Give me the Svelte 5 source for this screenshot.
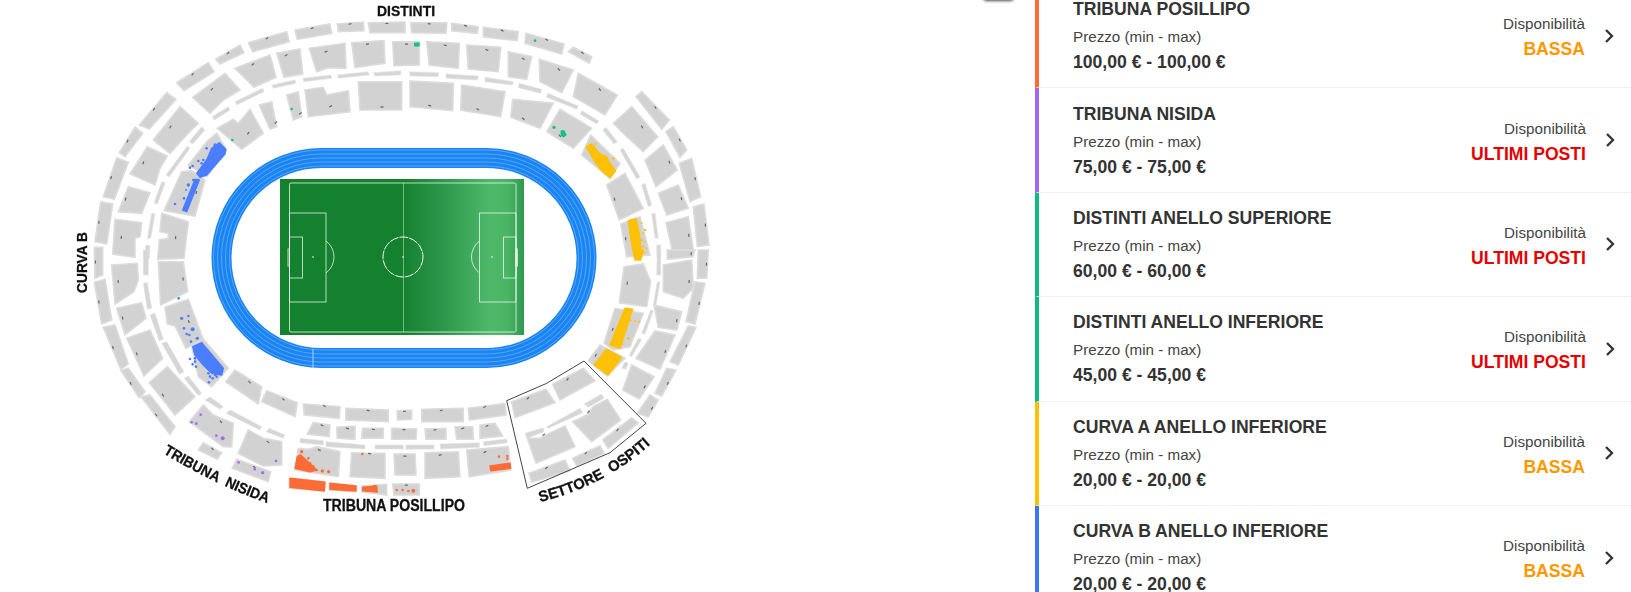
<script>
  const O = { a: [60, 0], b: [380, 0], c: [60, 250], d: [380, 250] };
  const conv = (z, arr) => arr.map((v, i) => +(O[z][i % 2] + v / 3).toFixed(1));
  const big = {
    a: [[705,90,810,72,815,100,712,118],[832,72,910,66,912,92,835,95],[925,68,1035,66,1035,98,930,98],[565,128,680,95,688,125,578,155],[467,178,540,135,552,158,480,192],[350,248,445,188,462,215,372,272],[238,375,320,278,348,298,268,387],[178,458,225,382,248,400,195,470],[130,590,170,473,205,487,163,598],[105,725,122,605,158,612,140,732],[650,160,720,147,728,222,672,232],[748,145,855,130,858,205,805,203,770,215],[875,128,972,122,975,190,885,203],[525,205,630,165,648,232,582,262],[398,292,495,220,540,270,490,300,450,340],[280,420,360,320,415,370,385,400,330,460],[210,522,262,440,322,468,300,505,285,555],[175,635,205,560,270,578,245,640],[165,658,245,668,240,710,225,715,225,772,158,762]],
    b: [[92,68,200,68,198,100,95,98],[215,70,295,80,292,100,215,92],[310,82,415,95,412,122,310,110],[438,100,552,132,545,162,435,130],[565,155,580,142,635,170,628,190],[38,125,118,125,118,195,42,197],[140,125,238,130,235,205,148,195],[260,135,362,142,355,215,265,207],[385,155,455,170,440,238,385,230],[478,178,580,210,545,278,480,245],[595,220,712,285,675,345,580,290],[768,290,785,275,868,360,845,388],[858,395,880,380,920,450,900,472],[898,490,935,475,962,590,930,605],[940,620,972,612,987,735,952,740],[700,370,755,320,833,410,790,455,740,410],[795,480,850,435,892,510,828,560],[835,580,895,555,925,625,860,645],[858,668,925,650,940,750,880,765]],
    c: [[103,-8,128,-8,128,75,105,85],[103,97,135,88,155,210,125,222],[130,232,165,225,205,342,182,358],[183,362,205,355,255,425,238,443],[243,440,270,435,345,530,330,553],[155,45,232,40,235,90,222,125,165,162],[170,175,245,158,258,205,195,255],[200,265,270,240,308,325,252,378],[268,398,322,350,405,440,345,495]],
    d: [[955,0,985,0,980,85,952,85],[945,95,975,100,945,222,918,215],[925,228,948,232,895,345,870,335],[860,355,888,360,845,438,825,430],[772,490,810,435,835,450,805,500],[850,45,935,30,940,115,910,145,850,125],[822,165,905,185,890,240,835,232],[768,325,825,243,885,255,840,358],[728,420,755,345,822,380,778,447],[862,0,945,0,938,20,862,28]],
  };
  const inner = {
    a: [[735,270,790,262,800,285,865,272,870,335,745,350],[680,285,715,275,725,350,700,360],[598,315,635,305,650,380,630,388],[472,385,520,358,535,370,570,328,610,400,545,448],[895,245,1025,245,1025,330,900,330],[440,425,470,400,500,450,440,530,385,495],[365,515,395,512,435,540,405,648,312,632],[305,640,385,665,372,775,293,778,298,720,325,715,325,700,300,695]],
    b: [[90,243,220,250,218,332,90,320],[245,255,375,275,362,350,242,330],[398,298,520,310,480,385,392,352],[540,328,635,385,580,445,500,395],[632,405,720,490,690,535,605,465],[680,555,735,520,790,625,718,660],[722,672,780,650,810,765,740,770]],
    c: [[295,35,370,35,383,125,302,165],[315,172,385,148,430,268,378,295,345,228,322,222],[395,290,428,265,505,355,455,410,415,380],[497,395,525,360,605,410,595,462],[605,455,620,422,712,458,705,500],[730,462,840,470,838,505,733,495],[858,475,985,480,985,515,857,510],[742,552,760,518,810,525,808,560],[830,532,885,528,885,568,832,565],[908,535,970,535,970,565,905,565],[715,595,745,598,770,590,840,605,835,680,705,660],[875,608,925,610,975,610,975,685,870,680],[688,685,795,695,792,722,688,715],[808,700,890,708,888,725,808,720],[905,708,980,703,980,735,905,725],[388,515,430,465,460,495,520,520,515,590,490,590],[415,600,430,578,485,608,472,628],[535,610,565,540,610,565,665,575,665,645,610,648],[517,655,530,628,632,665,625,695]],
    d: [[52,482,95,480,95,508,52,510],[125,478,250,475,250,515,125,515],[265,475,375,460,378,495,268,510],[35,535,110,537,108,568,35,568],[135,537,198,535,198,568,138,568],[225,530,278,530,280,568,230,568],[300,525,345,520,368,558,300,565],[42,612,105,612,108,675,45,675],[135,608,235,605,240,680,135,685],[260,600,385,590,392,660,268,680],[38,702,118,702,118,735,42,735],[395,455,498,418,525,458,405,503],[518,403,610,355,645,392,540,450],[578,515,620,495,640,470,682,448,722,510,635,575],[442,565,480,565,508,550,555,528,585,590,468,640],[668,570,755,503,775,518,685,595],[578,625,660,587,672,610,590,648],[447,670,555,630,570,662,455,697],[732,50,790,42,812,95,800,170,718,158],[672,280,705,175,790,190,750,290,700,300],[625,332,660,285,735,325,680,378]],
  };
  const strips = {
    a: [[635,255,705,240,708,250,640,265],[728,235,812,225,815,235,732,245],[832,225,925,215,928,225,835,235],[940,218,1022,212,1022,225,945,228],[525,305,608,265,612,275,530,315],[457,350,505,320,510,330,463,360],[388,425,425,380,435,390,398,432],[318,525,382,438,390,445,328,530],[282,610,305,545,316,548,292,612],[262,715,275,640,285,642,272,715],[252,775,258,735,270,737,268,775]],
    b: [[88,215,175,218,175,230,90,228],[198,222,295,228,292,240,198,235],[315,232,400,245,398,255,315,245],[418,250,485,268,482,280,415,263],[503,280,595,318,590,328,500,292],[607,332,657,363,650,372,600,342],[668,390,678,382,712,425,702,432],[720,450,730,445,780,530,770,538],[785,555,795,550,815,615,805,620],[815,640,825,640,835,715,825,715],[830,735,842,735,842,770,830,770]],
    c: [[250,0,265,0,265,75,250,75],[250,100,262,97,275,175,262,178],[270,195,285,190,310,268,298,272],[305,280,320,275,372,365,358,372],[373,385,385,378,425,430,415,437],[435,450,450,440,490,470,480,478],[498,490,510,480,605,530,600,540],[618,545,628,535,675,555,670,565],[720,565,790,572,790,585,720,578],[798,575,915,585,915,597,798,590],[945,585,1030,585,1030,597,945,597]],
    d: [[78,585,162,585,162,597,78,598],[180,582,298,578,298,592,182,597],[310,575,380,567,382,578,312,587],[612,462,665,432,672,445,625,472],[500,530,600,475,608,488,505,535],[435,550,490,533,492,545,440,565],[832,0,842,0,842,75,830,75],[820,165,832,95,840,97,828,165],[785,250,812,180,820,182,795,252],[748,315,775,265,785,268,755,320],[725,355,735,335,745,340,738,358]],
  };
  const flat = (g) => Object.keys(g).flatMap((z) => g[z].map((p) => conv(z, p)));
  const pts = (p) => p.join(' ');
  const CX = 403, CY = 258;
  const mark = (p, out) => {
    let x = 0, y = 0;
    for (let i = 0; i < p.length; i += 2) { x += p[i]; y += p[i + 1]; }
    x /= p.length / 2; y /= p.length / 2;
    const dx = x - CX, dy = y - CY, d = Math.hypot(dx, dy);
    let r = 0;
    for (let i = 0; i < p.length; i += 2) r += Math.abs((p[i] - x) * dx + (p[i + 1] - y) * dy) / d;
    r /= p.length / 2;
    const s = (out ? 0.8 : -0.8) * r;
    return { x: +(x + (dx / d) * s).toFixed(1), y: +(y + (dy / d) * s).toFixed(1), a: +((Math.atan2(dy, dx) * 180) / Math.PI + 90).toFixed(0) };
  };
  const bigP = flat(big), innerP = flat(inner), stripP = flat(strips);
  const marks = [...bigP.map((p) => mark(p, true)), ...innerP.map((p) => mark(p, false))];

  const seats = [
    { c: '#4a7dff', z: 'a', polys: [[410,520,440,480,455,445,478,428,497,448,495,462,440,525,420,532],[405,538,418,540,380,635,368,630]], dots: [[440,445,3],[465,435,4],[415,483,3],[398,498,3],[390,503,3],[425,490,3],[430,480,3],[345,612,3],[372,595,3],[400,540,3],[385,555,4],[378,570,2]] },
    { c: '#4a7dff', z: 'c', polys: [[398,290,425,278,490,355,485,375,455,370,430,345,405,315]], dots: [[356,145,3],[365,205,4],[385,198,3],[372,235,3],[398,238,5],[380,252,3],[388,255,3],[393,275,3],[412,265,4],[390,327,3],[405,325,3],[405,335,3],[398,343,3],[408,350,3],[445,370,3],[465,375,3],[450,380,3],[458,385,3],[470,380,3],[447,397,3]] },
    { c: '#10c47c', z: 'a', polys: [], dots: [[517,420,3],[695,327,3]] },
    { c: '#10c47c', z: 'b', polys: [[104,130,117,130,117,137,104,137],[544,393,552,393,558,405,550,410,544,404]], dots: [[465,122,3],[522,382,4]] },
    { c: '#ffc107', z: 'b', polys: [[618,440,635,432,660,462,680,470,690,490,707,512,690,533,665,512,648,490],[745,662,768,655,778,700,785,770,762,770,752,715]], dots: [[645,432,2],[700,475,3],[785,670,2],[795,690,3],[790,700,2],[785,720,3],[795,725,2],[790,740,2],[800,745,2]] },
    { c: '#ffc107', z: 'd', polys: [[760,0,790,0,782,30,765,30],[735,175,758,178,720,295,690,285],[680,297,725,322,685,375,642,345]], dots: [[793,8,2],[752,210,2],[765,213,2],[778,215,2],[745,265,3],[728,282,2]] },
    { c: '#ff6b35', z: 'c', polys: [[705,655,712,620,722,615,760,650,770,660,750,665],[690,685,795,697,793,723,690,712],[810,700,888,708,888,723,810,718],[908,712,950,708,952,726,908,722]], dots: [[725,605,4],[745,625,3],[750,640,3],[760,650,3],[770,660,3],[787,663,4],[806,665,4],[907,612,3]] },
    { c: '#ff6b35', z: 'd', polys: [[330,648,390,640,392,655,332,662]], dots: [[357,620,3],[382,618,3],[382,626,3],[50,720,3],[68,720,3],[85,723,3],[100,722,5]] },
    { c: '#a868f5', z: 'c', polys: [], dots: [[422,494,3],[395,517,3],[409,521,3],[469,557,3],[488,565,5],[536,637,3],[584,658,3],[608,668,4],[648,633,3]] },
  ];
  const laps = [0, 4, 8, 12, 16];
  const rows = [
    { t: 'TRIBUNA POSILLIPO', p: '100,00 € - 100,00 €', s: 'BASSA', c: 'orange' },
    { t: 'TRIBUNA NISIDA', p: '75,00 € - 75,00 €', s: 'ULTIMI POSTI', c: 'purple' },
    { t: 'DISTINTI ANELLO SUPERIORE', p: '60,00 € - 60,00 €', s: 'ULTIMI POSTI', c: 'green' },
    { t: 'DISTINTI ANELLO INFERIORE', p: '45,00 € - 45,00 €', s: 'ULTIMI POSTI', c: 'green' },
    { t: 'CURVA A ANELLO INFERIORE', p: '20,00 € - 20,00 €', s: 'BASSA', c: 'yellow' },
    { t: 'CURVA B ANELLO INFERIORE', p: '20,00 € - 20,00 €', s: 'BASSA', c: 'blue' },
  ];
</script>

<div class="page">
  <svg class="map" width="720" height="592" viewBox="0 0 720 592">
    <defs>
      <linearGradient id="grass" x1="0" x2="1" y1="0" y2="0">
        <stop offset="0" stop-color="#14812f" />
        <stop offset="0.5" stop-color="#14812f" />
        <stop offset="0.66" stop-color="#2b9549" />
        <stop offset="0.8" stop-color="#44ae60" />
        <stop offset="0.86" stop-color="#4cb868" />
        <stop offset="0.93" stop-color="#4ab565" />
        <stop offset="1" stop-color="#2f9a4f" />
      </linearGradient>
      <path id="lbl-nisida" d="M163,453 Q217,486 270,504" />
      <path id="lbl-ospiti" d="M540,502 Q605,486 652,443" />
    </defs>

    {#each stripP as p}<polygon class="strip" points={pts(p)} />{/each}
    {#each bigP as p}<polygon class="sec" points={pts(p)} />{/each}
    {#each innerP as p}<polygon class="sec" points={pts(p)} />{/each}
    {#each marks as m}<rect class="tick" x={m.x - 1.5} y={m.y - 0.6} width="3" height="1.2" transform="rotate({m.a} {m.x} {m.y})" />{/each}

    {#each seats as g}
      {#each g.polys as p}<polygon class="blob" fill={g.c} stroke={g.c} points={pts(conv(g.z, p))} />{/each}
      {#each g.dots as d}<circle fill={g.c} cx={O[g.z][0] + d[0] / 3} cy={O[g.z][1] + d[1] / 3} r={d[2] / 3 + 0.3} />{/each}
    {/each}

    <polygon class="guest" points={pts(conv('d', [380,452,500,400,612,333,798,520,690,608,442,715]))} />

    <rect class="track" x="221.5" y="158" width="365" height="200" rx="100" ry="100" />
    {#each laps as l}
      <rect class="lap" x={213.5 + l} y={150 + l} width={381 - 2 * l} height={216 - 2 * l} rx={108 - l} ry={108 - l} />
    {/each}
    <line class="lapline" x1="313" y1="349" x2="313" y2="368" />

    <rect x="280" y="179" width="244" height="156" fill="url(#grass)" />
    <g class="lines">
      <rect x="289.5" y="183" width="226.5" height="149" rx="1.5" />
      <line class="half" x1="403.5" y1="183" x2="403.5" y2="332" />
      <circle class="dash" cx="403" cy="257" r="20" />
      <rect x="289.5" y="213" width="36.5" height="89" />
      <rect x="289.5" y="237" width="13" height="41" />
      <rect x="479.5" y="213" width="36.5" height="89" />
      <rect x="503.5" y="237" width="12.5" height="41" />
      <rect x="288" y="249" width="1.5" height="17" />
      <rect x="516" y="249" width="1.5" height="17" />
      <path d="M326,241 A20,20 0 0 1 326,273" />
      <path d="M479.5,241 A20,20 0 0 0 479.5,273" />
    </g>
    <circle class="spot" cx="313" cy="257" r="0.8" />
    <circle class="spot" cx="492" cy="257" r="0.8" />
    <circle class="spot" cx="403" cy="257" r="0.8" />

    <g class="labels">
      <text x="377" y="16" font-size="15" textLength="58" lengthAdjust="spacingAndGlyphs">DISTINTI</text>
      <text transform="translate(86.5 293) rotate(-90)" font-size="15" textLength="61" lengthAdjust="spacingAndGlyphs">CURVA B</text>
      <text x="323" y="511" font-size="16" textLength="142" lengthAdjust="spacingAndGlyphs">TRIBUNA POSILLIPO</text>
      <text font-size="15"><textPath href="#lbl-nisida" textLength="116" lengthAdjust="spacingAndGlyphs">TRIBUNA&#160;&#160;NISIDA</textPath></text>
      <text font-size="15"><textPath href="#lbl-ospiti" textLength="126" lengthAdjust="spacingAndGlyphs">SETTORE&#160;&#160;OSPITI</textPath></text>
    </g>
  </svg>

  <div class="side">
    <span class="shadow"></span>
    <ul class="list">
      {#each rows as r}
        <li class="row {r.c}" class:bassa={r.s === 'BASSA'}>
          <div class="info">
            <h3>{r.t}</h3>
            <p class="range">Prezzo (min - max)</p>
            <p class="price">{r.p}</p>
          </div>
          <div class="avail">
            <span class="lab">Disponibilità</span>
            <strong class:low={r.s === 'BASSA'} class:last={r.s !== 'BASSA'}>{r.s}</strong>
          </div>
          <svg class="chev" width="10" height="16" viewBox="0 0 10 16"><path d="M2 2 L8 8 L2 14" /></svg>
        </li>
      {/each}
    </ul>
  </div>
</div>

<style>
  :global(body) { margin: 0; background: #fff; }
  .page {
    width: 1631px;
    height: 592px;
    overflow: hidden;
    display: flex;
    font-family: "Liberation Sans", Arial, sans-serif;
    color: #333;
  }
  .map { flex: none; display: block; filter: blur(0.35px); }
  .sec { fill: #d2d2d2; stroke: #dcdcdc; stroke-width: 1.6; }
  .strip { fill: #d6d6d6; stroke: #e4e4e4; stroke-width: 0.6; }
  .tick { fill: #666; }
  .blob { stroke-width: 1.4; stroke-linejoin: round; }
  .guest { fill: none; stroke: #444; stroke-width: 1; }
  .track { fill: none; stroke: #1a85f2; stroke-width: 20; }
  .lap { fill: none; stroke: #7dbcf8; stroke-width: 0.6; }
  .lapline { stroke: #a9d3fb; stroke-width: 1; }
  .lines { fill: none; stroke: #fff; stroke-opacity: 0.7; stroke-width: 1; }
  .half { stroke-opacity: 0.4; }
  .dash { stroke-dasharray: 9 1; stroke-opacity: 0.95; }
  .spot { fill: #fff; }
  .labels text { font-weight: 700; fill: #111; stroke: #111; stroke-width: 0.3; }

  .side { flex: none; width: 911px; position: relative; }
  .shadow {
    position: absolute;
    left: 263px;
    top: -26px;
    width: 31px;
    height: 26px;
    border-radius: 4px;
    background: #fff;
    box-shadow: 0 1px 3px rgba(0, 0, 0, 0.7);
  }
  .list { list-style: none; margin: -16px 0 0 315px; padding: 0; width: 596px; }
  .row {
    height: 104.4px;
    box-sizing: border-box;
    display: flex;
    align-items: center;
    border-left: 4px solid #000;
    border-bottom: 1px solid #f0f0f0;
    padding: 0 16px 0 34px;
  }
  .row.bassa { padding-right: 17px; }
  .row.orange { border-left-color: #ff6b35; }
  .row.purple { border-left-color: #a066f0; }
  .row.green { border-left-color: #10b981; }
  .row.yellow { border-left-color: #ffc107; }
  .row.blue { border-left-color: #3b76f6; }
  .info { flex: 1; padding-top: 1px; }
  h3 { margin: 0 0 8px; font-size: 17.6px; line-height: 19px; font-weight: 700; color: #333; }
  .range { margin: 0 0 7px; font-size: 15.2px; line-height: 19px; color: #444; }
  .price { margin: 0; font-size: 17.6px; line-height: 19px; font-weight: 700; color: #333; }
  .avail { display: flex; flex-direction: column; align-items: flex-end; gap: 7px; margin-right: 19px; padding-top: 2px; }
  .lab { font-size: 15.2px; line-height: 18px; color: #444; }
  strong { font-size: 17.6px; line-height: 18px; font-weight: 700; }
  .low { color: #ff9800; }
  .last { color: #e60000; }
  .chev { flex: none; }
  .chev path { fill: none; stroke: #333; stroke-width: 2.3; }
</style>
